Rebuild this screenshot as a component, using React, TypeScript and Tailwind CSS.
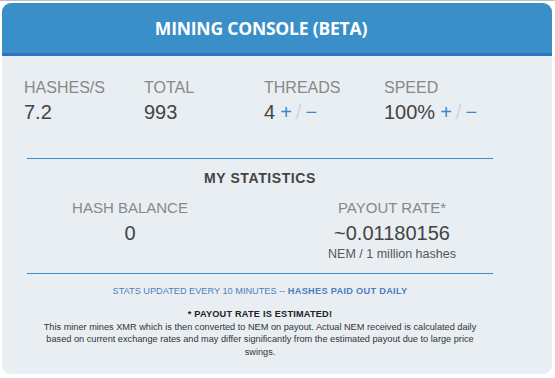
export default function App() {
  return (
    <div className="w-[555px] h-[378px] bg-white font-['Liberation_Sans',Arial,sans-serif]">
      <div className="h-px bg-[#bdbdbd]" />
      <div className="ml-[2px] mt-[2px] w-[550px] h-[371px] rounded-[9px] bg-[#e9eef3] overflow-hidden">
        {/* Header */}
        <div className="h-[53px] bg-[#3a8fc9] border-b-[3px] border-[#2f74c4] flex items-center justify-center pr-[32px]">
          <h1 className="font-['Open_Sans',sans-serif] font-bold text-[17.5px] text-white tracking-[-0.2px]">
            MINING CONSOLE (BETA)
          </h1>
        </div>

        {/* Live stats */}
        <div className="ml-[22px] pt-[23px] grid grid-cols-[120px_120px_120px_120px]">
          <Stat label="HASHES/S" value="7.2" />
          <Stat label="TOTAL" value="993" />
          <Stat label="THREADS" value="4" adjust />
          <Stat label="SPEED" value="100%" adjust />
        </div>

        <div className="ml-[25px] w-[466px]">
          <div className="mt-[34px] h-px bg-[#3a8fc9]" />

          <h2 className="mt-[9px] text-center text-[14px] leading-[20px] font-bold tracking-[0.6px] text-[#444]">
            MY STATISTICS
          </h2>

          <div className="grid grid-cols-[206px_260px] text-center">
            <div>
              <div className="mt-[11px] text-[15px] leading-[18px] text-[#888]">HASH BALANCE</div>
              <div className="mt-[4px] text-[20px] leading-[24px] text-[#444]">0</div>
            </div>
            <div className="pl-[58px]">
              <div className="mt-[11px] text-[15px] leading-[18px] text-[#888]">PAYOUT RATE*</div>
              <div className="mt-[4px] text-[20px] leading-[24px] text-[#444]">~0.01180156</div>
              <div className="mt-[1px] text-[12.5px] leading-[16px] text-[#555]">NEM / 1 million hashes</div>
            </div>
          </div>

          <div className="mt-[11px] h-px bg-[#3a8fc9]" />

          <p className="mt-[10px] text-center text-[9.2px] leading-[14px] text-[#4a7fc0]">
            STATS UPDATED EVERY 10 MINUTES -- <span className="font-bold tracking-[0.3px]">HASHES PAID OUT DAILY</span>
          </p>

          <div className="mt-[10px] text-center text-[9.2px] leading-[12.7px] text-[#333]">
            <div className="font-bold text-[#222] tracking-[0.2px]">* PAYOUT RATE IS ESTIMATED!</div>
            <p className="px-[6px]">
              This miner mines XMR which is then converted to NEM on payout. Actual NEM received is calculated daily
              based on current exchange rates and may differ significantly from the estimated payout due to large price
              swings.
            </p>
          </div>
        </div>
      </div>
    </div>
  );
}

function Stat({ label, value, adjust }: { label: string; value: string; adjust?: boolean }) {
  return (
    <div>
      <div className="text-[16px] leading-[18px] text-[#888]">{label}</div>
      <div className="mt-[3px] text-[20px] leading-[24px] text-[#444] whitespace-nowrap">
        {value}
        {adjust && (
          <>
            <span className="ml-[5px] text-[#3b87d0] cursor-pointer">+</span>
            <span className="mx-[4px] text-[#cfd6dd]">/</span>
            <span className="text-[#3b87d0] cursor-pointer">−</span>
          </>
        )}
      </div>
    </div>
  );
}
